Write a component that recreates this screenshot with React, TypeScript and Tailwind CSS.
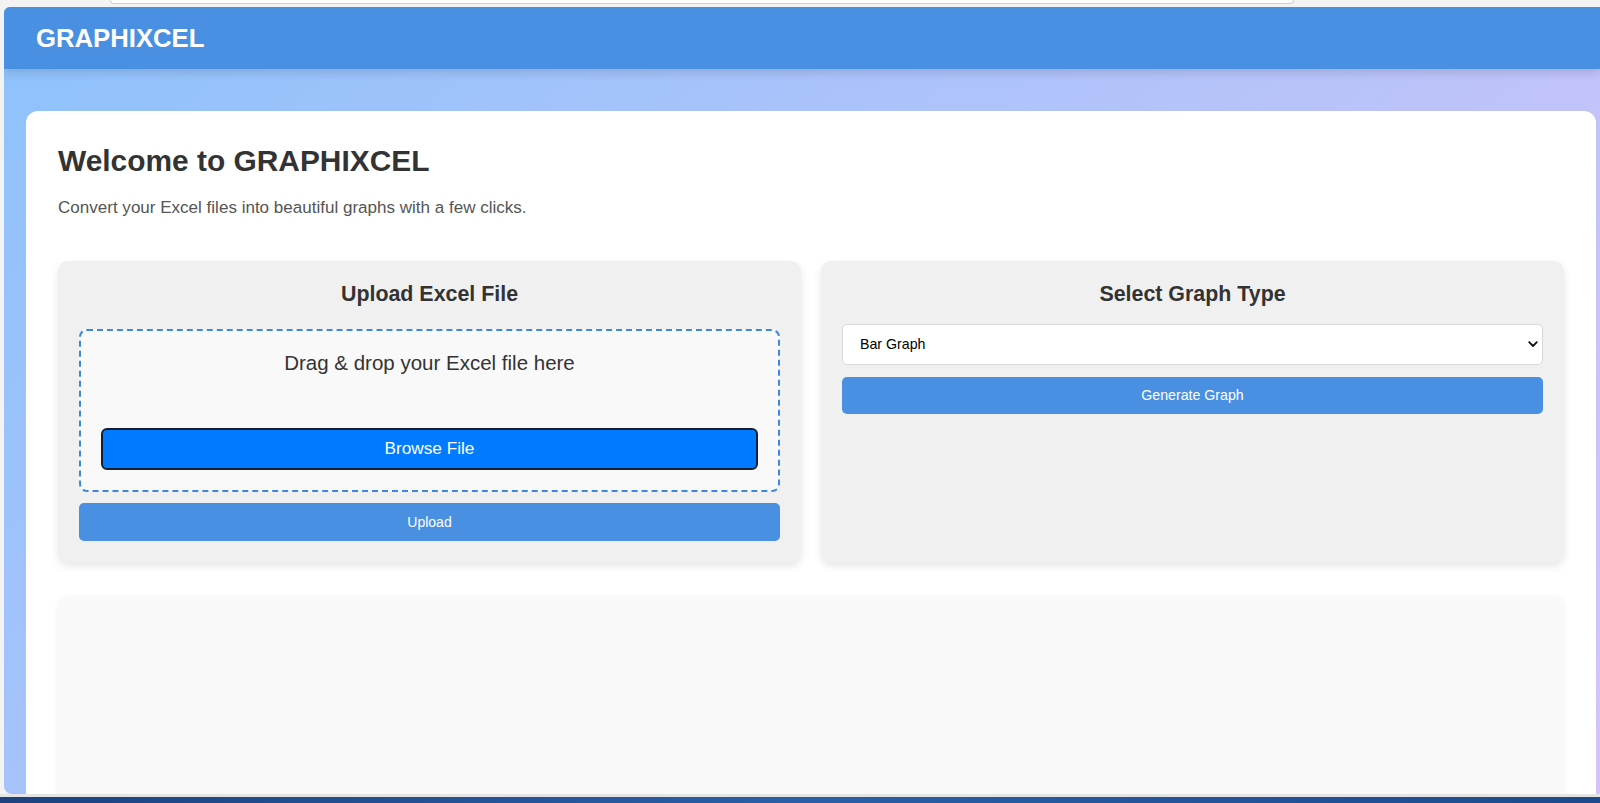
import React from 'react';

const font = "font-['Liberation_Sans',Arial,sans-serif]";

const ChevronDown: React.FC = () => (
  <svg width="10" height="7" viewBox="0 0 10 7" fill="none">
    <path d="M1.2 1.2 5 5 8.8 1.2" stroke="#111" strokeWidth="1.8" strokeLinecap="round" strokeLinejoin="round" />
  </svg>
);

const UploadPanel: React.FC = () => (
  <div className="rounded-[10px] bg-[#f0f0f0] p-[21px] shadow-[0_4px_8px_rgba(0,0,0,0.1)]">
    <h2 className="text-center text-[21.4px] leading-[24px] font-bold text-[#333]">Upload Excel File</h2>
    <div className="mt-[23px] rounded-[8px] border-2 border-dashed border-[#3b87e4] bg-[#f9f9f9] p-[20px]">
      <p className="text-center text-[20.5px] leading-[24px] text-[#333]">Drag &amp; drop your Excel file here</p>
      <button className="mt-[53px] flex h-[42px] w-full items-center justify-center rounded-[6px] border-2 border-[#14202e] bg-[#007bff] text-[17.2px] text-white">
        Browse File
      </button>
    </div>
    <button className="mt-[11px] flex h-[38px] w-full items-center justify-center rounded-[5px] bg-[#4a90e2] text-[14px] text-white">
      Upload
    </button>
  </div>
);

const GraphPanel: React.FC = () => (
  <div className="rounded-[10px] bg-[#f0f0f0] p-[21px] shadow-[0_4px_8px_rgba(0,0,0,0.1)]">
    <h2 className="text-center text-[21.4px] leading-[24px] font-bold text-[#333]">Select Graph Type</h2>
    <div className="mt-[18px] flex h-[41px] items-center justify-between rounded-[5px] border border-[#d8d8d8] bg-white pl-[17px] pr-[4px]">
      <span className="text-[14.2px] text-black">Bar Graph</span>
      <ChevronDown />
    </div>
    <button className="mt-[12px] flex h-[37px] w-full items-center justify-center rounded-[5px] bg-[#4a90e2] text-[14.2px] text-white">
      Generate Graph
    </button>
  </div>
);

export default function App() {
  return (
    <div className={`${font} flex h-[803px] w-[1600px] flex-col overflow-hidden bg-[#f3f3f3]`}>
      {/* browser chrome edge */}
      <div className="h-[7px] flex-none">
        <div className="ml-[110px] h-[4px] w-[1184px] rounded-b-[8px] border-x border-b border-[#cfcfcf] bg-white" />
      </div>

      <div className="flex h-[787px] flex-none">
        <div className="w-[4px] flex-none bg-[#f3f3f3]" />
        <div className="flex flex-1 flex-col overflow-hidden rounded-tl-[6px] rounded-bl-[8px] bg-[linear-gradient(135deg,#8ec2fc_0%,#d6c4f8_100%)]">
          <header className="relative z-10 flex h-[62px] flex-none items-center bg-[#4a90e2] px-[32px] shadow-[0_3px_10px_rgba(0,0,0,0.15)]">
            <h1 className="text-[25.7px] font-bold text-white">GRAPHIXCEL</h1>
          </header>

          <main className="pl-[22px] pt-[42px]">
            <div className="w-[1570px] rounded-[12px] bg-white px-[32px] pt-[33px] pb-[40px]">
              <h1 className="text-[29.9px] leading-[34px] font-bold text-[#333]">Welcome to GRAPHIXCEL</h1>
              <p className="mt-[20px] text-[17.05px] leading-[20px] text-[#555]">
                Convert your Excel files into beautiful graphs with a few clicks.
              </p>

              <div className="mt-[43px] grid grid-cols-2 gap-[20px]">
                <UploadPanel />
                <GraphPanel />
              </div>

              <div className="mt-[34px] h-[320px] rounded-[10px] bg-[#f9f9f9] shadow-[0_2px_6px_rgba(0,0,0,0.06)]" />
            </div>
          </main>
        </div>
      </div>

      <div className="h-[3px] flex-none bg-[#e4e4e4]" />
      <div className="h-[6px] flex-none bg-[linear-gradient(90deg,#1c427f,#2a5ea6,#1c4a8c)]" />
    </div>
  );
}
